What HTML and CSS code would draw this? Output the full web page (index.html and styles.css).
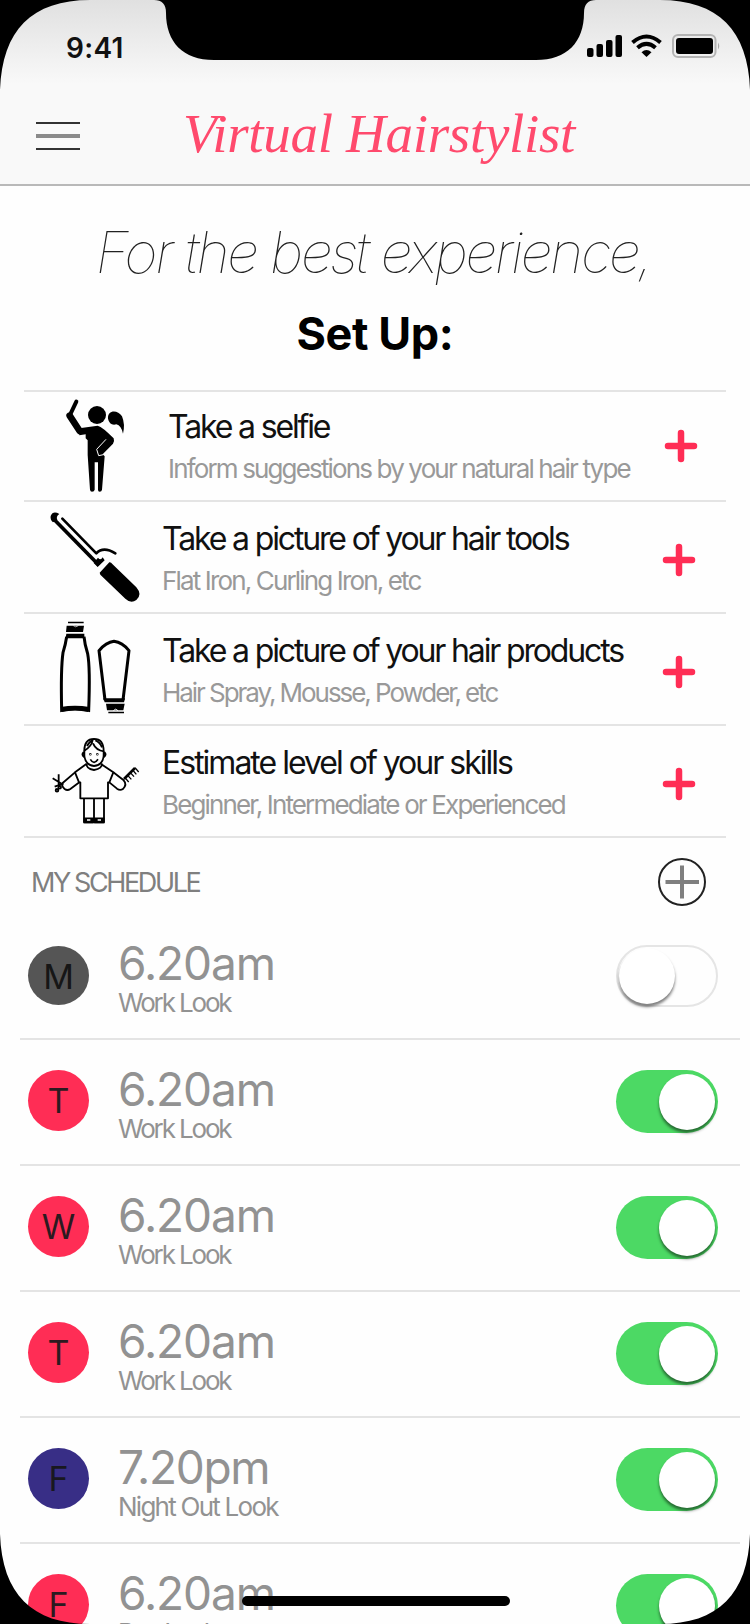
FILE: index.html
```html
<!DOCTYPE html>
<html lang="en">
<head>
<meta charset="utf-8">
<title>Virtual Hairstylist</title>
<link rel="stylesheet" href="styles.css">
</head>
<body>
<div class="phone">
  <header class="header">
    <div class="status">
      <span class="clock">9:41</span>
      <svg class="indicators" width="136" height="28" viewBox="586 32 136 28">
        <rect x="587" y="48" width="6.5" height="9" rx="2"/>
        <rect x="596.5" y="44" width="6.5" height="13" rx="2"/>
        <rect x="606" y="40" width="6.5" height="17" rx="2"/>
        <rect x="615.5" y="35" width="6.5" height="22" rx="2"/>
        <g fill="none" stroke="#000" stroke-width="4">
          <path d="M632.500 42.500Q646.500 30.500 660.500 42.500"/>
          <path d="M637.500 47.800Q646.500 40 655.500 47.800"/>
        </g>
        <path d="M641.500 52.200Q646.500 48 651.500 52.200L646.500 57Z"/>
        <rect x="673" y="35" width="42.500" height="22" rx="5" fill="none" stroke="#b4b4b4" stroke-width="2"/>
        <rect x="676" y="38" width="37" height="16" rx="3"/>
        <path d="M718 42.500Q720.500 46 718 49.500Z" fill="#aaa"/>
      </svg>
    </div>
    <div class="navbar">
      <svg class="menu" width="44" height="30" viewBox="0 0 44 30">
        <path d="M0 2H44M0 28H44" stroke="#333" stroke-width="2"/>
        <path d="M0 15H44" stroke="#8a8a8a" stroke-width="4"/>
      </svg>
      <h1 class="logo">Virtual Hairstylist</h1>
    </div>
  </header>

  <p class="tagline">For the best experience,</p>
  <h2 class="setup-title">Set Up:</h2>

  <ul class="setup">
    <li class="step step-first">
      <svg class="step-icon" width="100" height="108" viewBox="72 21 300 324">
        <path d="M169 50L149 92L178 140L215 134" fill="none" stroke="#000" stroke-width="12" stroke-linecap="round" stroke-linejoin="round"/>
        <path d="M149 92L179 138" stroke="#000" stroke-width="20" stroke-linecap="round"/>
        <circle cx="231" cy="90" r="27"/>
        <path d="M264 101C262 74 293 73 306 94Q316 118 309 146Q304 122 289 118Q269 123 264 101Z"/>
        <path d="M178 130L233 122Q248 126 281 160Q284 168 279 176L248 208L254 214L246 314Q245 320 239 320Q234 320 234 314V232H224V314Q223 320 216 320Q211 320 210 314L203 210V166L197 160V148L178 151Z"/>
        <path d="M258 163L230 193L236 212L250 209" fill="none" stroke="#fff" stroke-width="3"/>
      </svg>
      <div class="step-text"><h3>Take a selfie</h3><p>Inform suggestions by your natural hair type</p></div>
      <svg class="plus" width="34" height="34" viewBox="0 0 34 34"><path d="M4 17H30M17 4V30"/></svg>
    </li>
    <li class="step">
      <svg class="step-icon" width="100" height="110" viewBox="72 351 300 330">
        <path d="M101 402L237 541" fill="none" stroke="#000" stroke-width="11"/>
        <path d="M118 387Q99 376 92 393Q90 404 99 412L112 405Q107 394 118 387Z"/>
        <path d="M127 401L229 505Q250 483 286 505" fill="none" stroke="#000" stroke-width="8" stroke-linecap="round" stroke-linejoin="round"/>
        <path d="M225 529L234 518Q242 528 248 517L254 526L233 546L221 534Z"/>
        <path d="M239 563L268 532Q273 531 277 537L349 607Q368 629 349 645Q333 657 316 641L241 569Z"/>
      </svg>
      <div class="step-text"><h3>Take a picture of your hair tools</h3><p>Flat Iron, Curling Iron, etc</p></div>
      <svg class="plus" width="34" height="34" viewBox="0 0 34 34"><path d="M4 17H30M17 4V30"/></svg>
    </li>
    <li class="step">
      <svg class="step-icon" width="100" height="110" viewBox="72 12 300 330">
        <path d="M144 35H191V40H144ZM140 47H192L189 66H138ZM139 71H193V85H137Z"/>
        <path d="M160 47Q167 54 175 47" fill="none" stroke="#fff" stroke-width="2"/>
        <path d="M140 80Q137 101 129 128Q122 175 125 301Q165 292 206 301Q211 173 203 131Q194 103 192 80" fill="none" stroke="#000" stroke-width="9"/>
        <path d="M122 291Q165 284 208 291L205 306Q165 297 125 306Z"/>
        <path d="M255 270L237 122Q258 97 282 94Q307 97 327 122L309 270" fill="none" stroke="#000" stroke-width="9" stroke-linejoin="round"/>
        <path d="M250 265H315L312 277H254ZM258 281H314L310 301H261ZM265 305H312V310H265Z"/>
        <path d="M280 302Q287 293 294 302" fill="none" stroke="#fff" stroke-width="3"/>
      </svg>
      <div class="step-text"><h3>Take a picture of your hair products</h3><p class="tight">Hair Spray, Mousse, Powder, etc</p></div>
      <svg class="plus" width="34" height="34" viewBox="0 0 34 34"><path d="M4 17H30M17 4V30"/></svg>
    </li>
    <li class="step">
      <svg class="step-icon line" width="100" height="110" viewBox="72 348 300 330">
        <path d="M193 424Q192 387 222 387Q251 387 251 424V439Q247 466 222 468Q198 466 193 439Z"/>
        <path d="M192 423Q216 408 218 390M219 400Q228 421 252 424M201 408Q209 394 218 391M226 391Q240 396 246 412"/>
        <path d="M192 426Q183 434 194 441M252 426Q261 434 250 441" stroke-width="7"/>
        <path d="M211 448Q222 466 234 448" stroke-width="5"/>
        <circle cx="211" cy="433" r="1"/><circle cx="232" cy="433" r="1"/>
        <path d="M200 460Q198 476 222 480Q248 476 245 460M199 462L165 487L177 517H181V565H264V517H268L280 487L243 462"/>
        <path d="M165 487L128 519Q123 527 134 537Q142 543 151 537L178 517M280 487L311 511Q322 523 309 537Q300 543 291 536L268 517"/>
        <path d="M192 566V637M222 566V637M252 566V637M190 637H254"/>
        <path d="M193 625H219V637H193ZM224 625H251V637H224Z" fill="#000"/>
        <path d="M201 630H211M233 630H243" stroke="#fff" stroke-width="4"/>
        <path d="M116 493V529M98 505L130 524M130 521L104 530"/>
        <circle cx="111" cy="541" r="4"/><circle cx="119" cy="532" r="4"/>
        <path d="M312 507L345 474" stroke-width="8"/>
        <path d="M315 503L326 516M323 496L334 508M331 488L342 500M338 480L349 493M345 473L356 486" stroke-width="4"/>
      </svg>
      <div class="step-text"><h3 class="loose">Estimate level of your skills</h3><p>Beginner, Intermediate or Experienced</p></div>
      <svg class="plus" width="34" height="34" viewBox="0 0 34 34"><path d="M4 17H30M17 4V30"/></svg>
    </li>
  </ul>

  <div class="schedule-head">
    <h2>MY SCHEDULE</h2>
    <svg width="50" height="50" viewBox="0 0 50 50" fill="none">
      <circle cx="25" cy="25" r="23" stroke="#222" stroke-width="2"/>
      <path d="M8.500 25H42M25 8.500V41.500" stroke="#000" stroke-opacity=".5" stroke-width="4"/>
    </svg>
  </div>

  <ul class="schedule">
    <li class="alarm muted"><span class="day">M</span><div class="when"><b>6.20am</b><span>Work Look</span></div><span class="switch off"><i></i></span></li>
    <li class="alarm"><span class="day">T</span><div class="when"><b>6.20am</b><span>Work Look</span></div><span class="switch"><i></i></span></li>
    <li class="alarm"><span class="day">W</span><div class="when"><b>6.20am</b><span>Work Look</span></div><span class="switch"><i></i></span></li>
    <li class="alarm"><span class="day">T</span><div class="when"><b>6.20am</b><span>Work Look</span></div><span class="switch"><i></i></span></li>
    <li class="alarm night"><span class="day">F</span><div class="when"><b>7.20pm</b><span>Night Out Look</span></div><span class="switch"><i></i></span></li>
    <li class="alarm"><span class="day">F</span><div class="when"><b>6.20am</b><span>Day Look</span></div><span class="switch"><i></i></span></li>
  </ul>

  <div class="home-bar"></div>
  <svg class="bezel" width="750" height="1624" viewBox="0 0 750 1624">
    <path d="M0 0H90C32 0 2 30 0 90Z"/>
    <path d="M750 0H660C718 0 748 30 750 90Z"/>
    <path d="M154 0C162 0 166 4 166 13C166 42 183 60 214 60H536C567 60 584 42 584 13C584 4 588 0 596 0Z"/>
    <path d="M0 1624H90C32 1624 2 1594 0 1534Z"/>
    <path d="M750 1624H660C718 1624 748 1594 750 1534Z"/>
  </svg>
</div>
</body>
</html>
```

FILE: styles.css
```css
* { box-sizing: border-box; margin: 0; padding: 0; }
html, body { width: 750px; height: 1624px; overflow: hidden; }
body { font-family: Inter, "Liberation Sans", sans-serif; background: #fff; color: #000; }
ul { list-style: none; }

.phone { position: relative; width: 750px; height: 1624px; overflow: hidden; background: #fefefe; }

.header { height: 186px; border-bottom: 2px solid #b9b9b9; background: linear-gradient(#e0e0e0, #f9f9f9 84px); }
.status { display: flex; justify-content: space-between; height: 90px; padding: 31px 28px 0 66px; }
.clock { font-size: 28px; font-weight: 600; line-height: 34px; letter-spacing: 0.3px; color: #111; }
.indicators { margin-top: 1px; }
.navbar { display: flex; align-items: flex-start; height: 94px; padding-left: 36px; }
.menu { margin-top: 31px; }
.logo { margin-left: 103px; padding-top: 9px; font: italic 400 55px/70px "Liberation Serif", serif; letter-spacing: -0.3px; color: #ff4a6d; white-space: nowrap; }

.tagline { margin-top: 29px; height: 76px; padding-right: 3px; line-height: 76px; font-size: 57px; font-weight: 100; font-style: italic; letter-spacing: -2.35px; text-align: center; white-space: nowrap; color: #222; }
.setup-title { margin-top: 13px; height: 60px; line-height: 60px; font-size: 45px; font-weight: 700; letter-spacing: -0.4px; text-align: center; }

.setup { margin: 26px 24px 0; border-top: 2px solid #e4e4e4; }
.step { display: flex; height: 112px; padding: 0 30px 0 20px; border-bottom: 2px solid #e4e4e4; }
.step-icon { flex: none; }
.line { fill: none; stroke: #000; stroke-width: 5.500; stroke-linejoin: round; }
.step-text { flex: 1; padding: 17px 0 0 18px; white-space: nowrap; }
.step-text h3 { font-size: 32px; font-weight: 400; line-height: 40px; letter-spacing: -2.15px; color: #111; }
.step-text .loose { letter-spacing: -2px; }
.step-text p { margin-top: 5px; font-size: 26px; font-weight: 400; line-height: 34px; letter-spacing: -1.85px; color: #999; }
.step-text .tight { letter-spacing: -2.05px; }
.plus { flex: none; margin-top: 41px; fill: none; stroke: #ff2d55; stroke-width: 6.500; stroke-linecap: round; }
.step-first { height: 110px; padding-right: 28px; }
.step-first .step-text { padding: 15px 0 0 24px; }
.step-first .plus { margin-top: 37px; }

.schedule-head { display: flex; align-items: center; justify-content: space-between; height: 75px; padding: 13px 43px 0 31px; }
.schedule-head h2 { padding-top: 2px; font-size: 27px; font-weight: 400; line-height: 34px; letter-spacing: -2.4px; color: #7f7f7f; }

.schedule { padding: 0 10px 0 20px; }
.alarm { display: flex; align-items: flex-start; height: 127px; padding: 32px 22px 0 8px; border-bottom: 2px solid #e4e4e4; }
.alarm + .alarm { height: 126px; padding-top: 30px; }
.day { width: 61px; height: 61px; border-radius: 50%; background: #ff2d55; color: #2b1a20; font-size: 34px; line-height: 62px; text-align: center; }
.muted .day { height: 59px; margin-top: 1px; background: #555; color: #161616; }
.night .day { background: #382e86; color: #19181f; }
.when { flex: 1; margin: -2px 0 0 29px; white-space: nowrap; color: #929292; }
.when b { display: block; font-size: 46px; font-weight: 400; line-height: 42px; letter-spacing: -1.1px; }
.when span { display: block; margin-top: 4px; font-size: 26px; font-weight: 400; line-height: 30px; letter-spacing: -2.15px; }
.muted .when { margin-top: -3px; }
.night .when b { letter-spacing: -1.3px; }
.night .when span { letter-spacing: -1.75px; }
.switch { display: flex; justify-content: flex-end; width: 102px; height: 63px; padding: 4px 3px; border-radius: 32px; background: #4cd964; }
.switch i { width: 56px; height: 56px; border-radius: 50%; background: #fff; box-shadow: 0 3px 3px rgba(0, 0, 0, .5); }
.switch.off { justify-content: flex-start; height: 62px; padding: 1px; border: 2px solid #e5e5e5; background: #fefefe; }

.home-bar { position: absolute; left: 242px; top: 1596px; width: 268px; height: 10px; border-radius: 5px; background: #000; }
.bezel { position: absolute; left: 0; top: 0; }
```
